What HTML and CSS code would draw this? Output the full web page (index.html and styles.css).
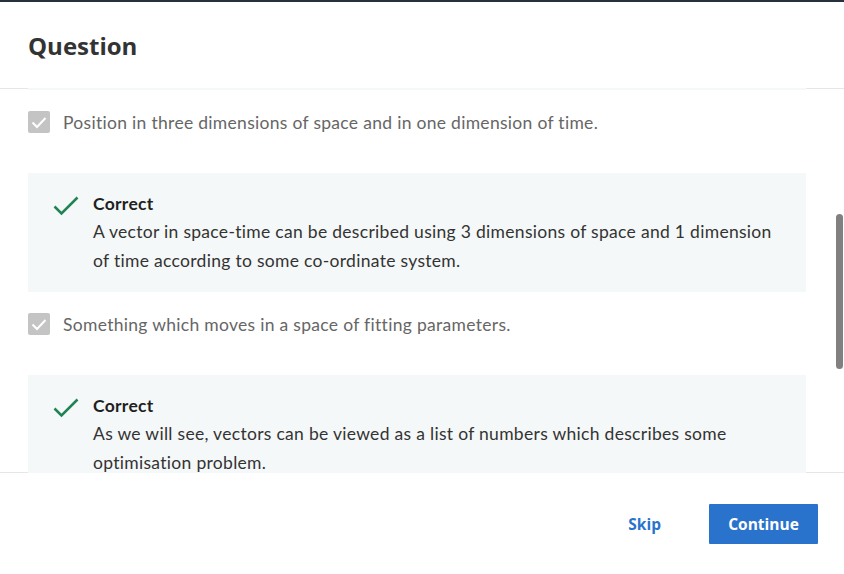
FILE: index.html
```html
<!DOCTYPE html>
<html>
<head>
<meta charset="utf-8">
<link rel="stylesheet" href="styles.css">
</head>
<body>
<div class="modal">
  <header class="head">
    <h1 class="title">Question</h1>
  </header>
  <main class="scroll">
    <div class="feedback tail"></div>
    <div class="option">
      <span class="check"><svg viewBox="0 0 22 22" width="22" height="22"><path d="M4.5 11.5l4.5 4.5 8.5-9" fill="none" stroke="#fff" stroke-width="2"/></svg></span>
      <span class="opt-text">Position in three dimensions of space and in one dimension of time.</span>
    </div>
    <div class="feedback">
      <svg class="tick" viewBox="0 0 26 20" width="26" height="20"><path d="M1.5 10.5l7 7L24.5 1.5" fill="none" stroke="#1f8354" stroke-width="2.5"/></svg>
      <div class="fb-body">
        <div class="fb-title">Correct</div>
        <div class="fb-text">A vector in space-time can be described using 3 dimensions of space and 1 dimension of time according to some co-ordinate system.</div>
      </div>
    </div>
    <div class="option">
      <span class="check"><svg viewBox="0 0 22 22" width="22" height="22"><path d="M4.5 11.5l4.5 4.5 8.5-9" fill="none" stroke="#fff" stroke-width="2"/></svg></span>
      <span class="opt-text">Something which moves in a space of fitting parameters.</span>
    </div>
    <div class="feedback">
      <svg class="tick" viewBox="0 0 26 20" width="26" height="20"><path d="M1.5 10.5l7 7L24.5 1.5" fill="none" stroke="#1f8354" stroke-width="2.5"/></svg>
      <div class="fb-body">
        <div class="fb-title">Correct</div>
        <div class="fb-text">As we will see, vectors can be viewed as a list of numbers which describes some optimisation problem.</div>
      </div>
    </div>
    <div class="thumb"></div>
  </main>
  <footer class="foot">
    <button class="skip">Skip</button>
    <button class="continue">Continue</button>
  </footer>
</div>
</body>
</html>
```

FILE: styles.css
```css
html, body {
  margin: 0;
  padding: 0;
  background: #fff;
}
body {
  width: 844px;
  height: 574px;
  overflow: hidden;
  border-top: 2px solid #26313d;
  box-sizing: border-box;
}
.modal {
  display: flex;
  flex-direction: column;
  height: 572px;
}
.head {
  height: 86px;
  border-bottom: 1px solid #e6e6e6;
  padding: 0 28px;
  display: flex;
  align-items: center;
  flex: none;
}
.title {
  margin: 0;
  font-family: "Open Sans", sans-serif;
  font-weight: 700;
  font-size: 24px;
  color: #333;
}
.scroll {
  flex: 1;
  position: relative;
  overflow: hidden;
  margin: -1px 0 -1px 0;
  padding: 0 38px 0 28px;
  font-family: "Lato", sans-serif;
  font-size: 17.5px;
  letter-spacing: 0.3px;
}
.tail {
  height: 2px;
  padding: 0 !important;
  margin-bottom: 23px;
}
.option {
  display: flex;
  align-items: center;
  height: 24px;
  margin-bottom: 39px;
}
.check {
  width: 22px;
  height: 22px;
  border-radius: 2px;
  background: #c4c4c4;
  flex: none;
  display: flex;
}
.opt-text {
  margin-left: 13px;
  color: #666;
}
.feedback {
  background: #f5f8f8;
  display: flex;
  padding: 18px 21px 17px 25px;
  margin-bottom: 20px;
}
.tick {
  flex: none;
  margin-top: 5px;
  margin-right: 14px;
}
.fb-title {
  font-weight: 700;
  color: #1f1f1f;
  line-height: 26px;
}
.fb-text {
  color: #333;
  line-height: 29px;
}
.thumb {
  position: absolute;
  right: 1px;
  top: 126px;
  width: 7px;
  height: 155px;
  border-radius: 3.5px;
  background: #808080;
}
.foot {
  flex: none;
  height: 101px;
  border-top: 1px solid #e6e6e6;
  display: flex;
  align-items: center;
  justify-content: flex-end;
  padding: 0 26px 0 0;
}
.skip {
  border: none;
  background: none;
  font-family: "Open Sans", sans-serif;
  font-weight: 700;
  font-size: 15.5px;
  color: #2a73cc;
  padding: 0;
  margin-right: 48px;
}
.continue {
  border: none;
  background: #2a73cc;
  color: #fff;
  font-family: "Open Sans", sans-serif;
  font-weight: 700;
  font-size: 15.5px;
  width: 109px;
  height: 40px;
  border-radius: 1px;
  padding: 0;
}
```
